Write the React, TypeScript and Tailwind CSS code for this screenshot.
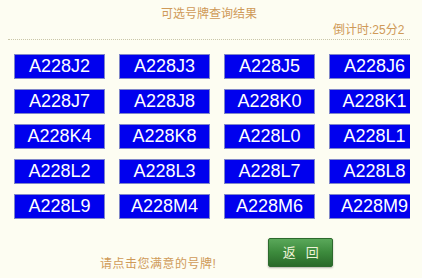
const plates = [
  "A228J2", "A228J3", "A228J5", "A228J6",
  "A228J7", "A228J8", "A228K0", "A228K1",
  "A228K4", "A228K8", "A228L0", "A228L1",
  "A228L2", "A228L3", "A228L7", "A228L8",
  "A228L9", "A228M4", "A228M6", "A228M9",
];

const cjk = { fontFamily: '"Liberation Sans", "Noto Sans CJK SC", sans-serif' };

export default function App() {
  return (
    <div className="w-[422px] h-[278px] bg-[#fdfdf2] overflow-hidden" style={cjk}>
      <div className="ml-[8px] w-[402px] overflow-hidden">
        {/* header */}
        <div className="h-[24px] pt-[6px] text-center text-[12px] leading-[16px] text-[#cf9a58]">
          可选号牌查询结果
        </div>
        <div className="h-[15px] pl-[325px] whitespace-nowrap text-[12px] leading-[12px] text-[#cf9a58]">
          倒计时:25分2
        </div>
        <div className="border-b border-dotted border-[#c9c6a8]" />

        {/* plates */}
        <div className="w-[440px] pt-[14px] pl-[6px] grid grid-cols-[91px_91px_91px_91px] gap-x-[14px] gap-y-[10px]">
          {plates.map((p) => (
            <button
              key={p}
              className="h-[25px] bg-[#0000ee] border border-[#7f86c8] text-white text-[18px] leading-[23px] text-center"
              style={{ fontFamily: '"Liberation Sans", Arial, sans-serif' }}
            >
              {p}
            </button>
          ))}
        </div>

        {/* footer */}
        <div className="flex items-start pt-[19px]">
          <div className="ml-[92px] mt-[19px] text-[12px] leading-[14px] tracking-[0.5px] text-[#cf9a58]">
            请点击您满意的号牌!
          </div>
          <button className="ml-[52px] w-[65px] h-[29px] rounded-[2px] border border-[#2d6a2d] bg-gradient-to-b from-[#5aa85a] via-[#3c8a3c] to-[#2a6a2a] text-[13px] text-[#eef3d8] tracking-[10px] pl-[10px] shadow-[0_1px_2px_rgba(0,0,0,0.3)]">
            返回
          </button>
        </div>
      </div>
    </div>
  );
}
